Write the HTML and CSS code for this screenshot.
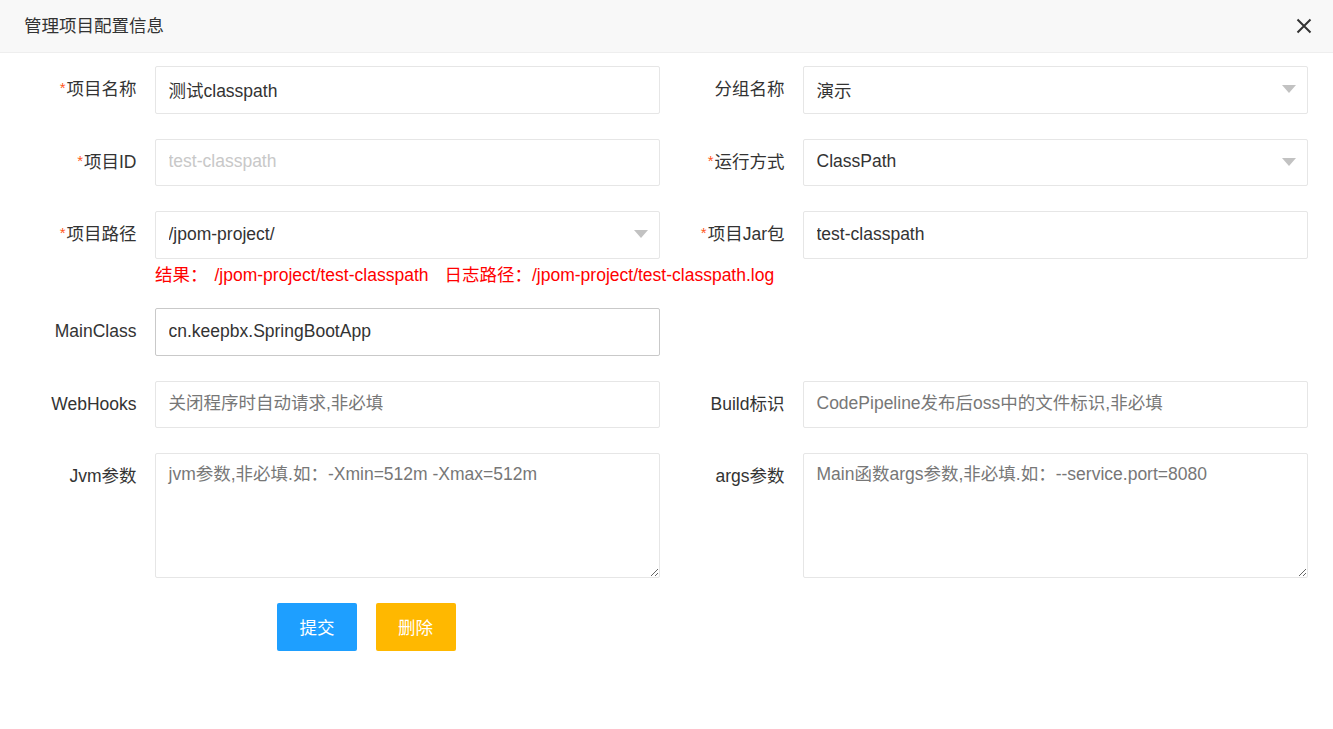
FILE: index.html
```html
<!DOCTYPE html>
<html lang="zh-CN">
<head>
<meta charset="utf-8">
<title>管理项目配置信息</title>
<link rel="stylesheet" href="styles.css">
</head>
<body>
<div class="dialog">
  <div class="header">
    <span class="title">管理项目配置信息</span>
    <span class="close">
      <svg width="16" height="16" viewBox="0 0 16 16"><path d="M1.5 1.5L14.5 14.5M14.5 1.5L1.5 14.5" stroke="#333" stroke-width="2" fill="none"/></svg>
    </span>
  </div>
  <form class="form">
    <div class="row">
      <div class="item">
        <label class="label"><span class="req">*</span>项目名称</label>
        <div class="field"><input class="input" type="text" value="测试classpath"></div>
      </div>
      <div class="item">
        <label class="label">分组名称</label>
        <div class="field"><input class="input" type="text" value="演示" readonly><span class="caret"></span></div>
      </div>
    </div>
    <div class="row">
      <div class="item">
        <label class="label"><span class="req">*</span>项目ID</label>
        <div class="field"><input class="input disabled" type="text" value="test-classpath" disabled></div>
      </div>
      <div class="item">
        <label class="label"><span class="req">*</span>运行方式</label>
        <div class="field"><input class="input" type="text" value="ClassPath" readonly><span class="caret"></span></div>
      </div>
    </div>
    <div class="row row-tight">
      <div class="item">
        <label class="label"><span class="req">*</span>项目路径</label>
        <div class="field"><input class="input" type="text" value="/jpom-project/" readonly><span class="caret"></span></div>
      </div>
      <div class="item">
        <label class="label"><span class="req">*</span>项目Jar包</label>
        <div class="field"><input class="input" type="text" value="test-classpath"></div>
      </div>
    </div>
    <div class="hint"><span>结果：</span><span class="hint-path">/jpom-project/test-classpath</span><span class="hint-log">日志路径：/jpom-project/test-classpath.log</span></div>
    <div class="row">
      <div class="item">
        <label class="label">MainClass</label>
        <div class="field"><input class="input hover" type="text" value="cn.keepbx.SpringBootApp"></div>
      </div>
      <div class="item"></div>
    </div>
    <div class="row">
      <div class="item">
        <label class="label">WebHooks</label>
        <div class="field"><input class="input" type="text" placeholder="关闭程序时自动请求,非必填"></div>
      </div>
      <div class="item">
        <label class="label">Build标识</label>
        <div class="field"><input class="input" type="text" placeholder="CodePipeline发布后oss中的文件标识,非必填"></div>
      </div>
    </div>
    <div class="row">
      <div class="item">
        <label class="label">Jvm参数</label>
        <div class="field"><textarea class="textarea" placeholder="jvm参数,非必填.如：-Xmin=512m -Xmax=512m"></textarea></div>
      </div>
      <div class="item">
        <label class="label">args参数</label>
        <div class="field"><textarea class="textarea" placeholder="Main函数args参数,非必填.如：--service.port=8080"></textarea></div>
      </div>
    </div>
    <div class="actions">
      <button type="button" class="btn btn-blue">提交</button>
      <button type="button" class="btn btn-warm">删除</button>
    </div>
  </form>
</div>
</body>
</html>
```
FILE: styles.css
```css
* { box-sizing: border-box; }
body {
  margin: 0;
  background: #fff;
  font-family: "Liberation Sans", "Noto Sans CJK SC", sans-serif;
  font-size: 17.5px;
  color: #333;
}
.header {
  height: 53px;
  background: #f8f8f8;
  border-bottom: 1px solid #eee;
  display: flex;
  align-items: center;
  padding: 0 21px 4px 24px;
}
.title {
  font-size: 17.5px;
  color: #333;
}
.close {
  margin-left: auto;
  display: flex;
  align-items: center;
  margin-top: 3px;
}
.form {
  padding: 13px 25px 0 17.5px;
}
.row {
  display: grid;
  grid-template-columns: 1fr 1fr;
  column-gap: 5.5px;
  margin-bottom: 25px;
}
.row-tight { margin-bottom: 0; }
.item {
  display: flex;
  align-items: flex-start;
}
.label {
  width: 137.5px;
  flex: none;
  height: 47.5px;
  line-height: 46px;
  padding-right: 18.5px;
  text-align: right;
  color: #333;
  white-space: nowrap;
}
.req {
  color: #ff5722;
  font-size: 15px;
  position: relative;
  top: -2px;
  margin-right: 1px;
}
.field {
  flex: 1;
  position: relative;
}
.input {
  display: block;
  width: 100%;
  height: 47.5px;
  border: 1px solid #e6e6e6;
  border-radius: 2px;
  padding: 0 12.5px 1px;
  font: inherit;
  color: #333;
  background: #fff;
  outline: none;
}
.input.hover { border-color: #c9c9c9; }
.input.disabled { color: #c8c8c8; background: #fff; }
.input::placeholder, .textarea::placeholder { color: #777; }
.caret {
  position: absolute;
  right: 12px;
  top: 19px;
  width: 0;
  height: 0;
  border-left: 7.5px solid transparent;
  border-right: 7.5px solid transparent;
  border-top: 8px solid #c2c2c2;
}
.textarea {
  display: block;
  width: 100%;
  height: 125px;
  border: 1px solid #e6e6e6;
  border-radius: 2px;
  padding: 9px 12.5px;
  font: inherit;
  line-height: 22px;
  color: #333;
  outline: none;
  resize: vertical;
}
.hint {
  padding-left: 137.5px;
  margin-top: 4px;
  margin-bottom: 20.5px;
  height: 25px;
  line-height: 25px;
  color: #f00;
  white-space: nowrap;
}
.hint-path { margin-left: 7px; }
.hint-log { margin-left: 16px; }
.actions {
  padding-left: 259.5px;
  display: flex;
  gap: 18.5px;
}
.btn {
  width: 80px;
  height: 47.5px;
  border: none;
  border-radius: 2px;
  color: #fff;
  font: inherit;
  cursor: pointer;
  padding: 0;
}
.btn-blue { background: #1e9fff; }
.btn-warm { background: #ffb800; }
```
